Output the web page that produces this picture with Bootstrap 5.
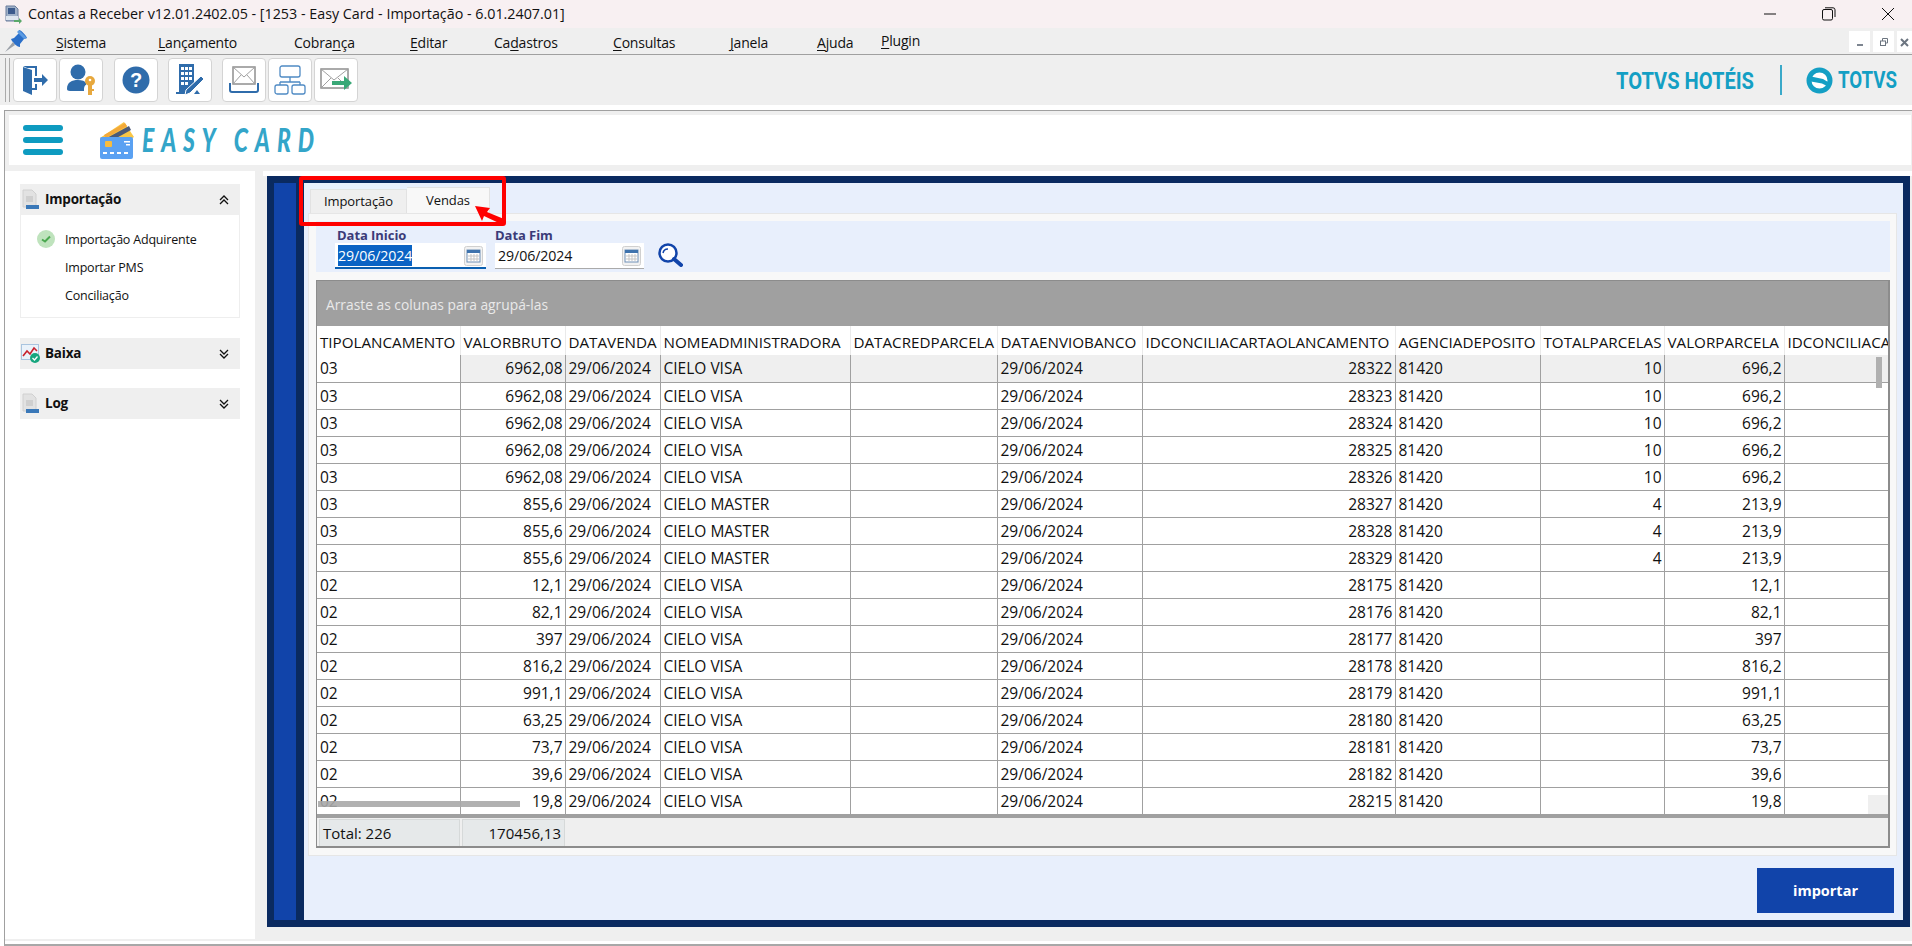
<!DOCTYPE html>
<html lang="pt-BR">
<head>
<meta charset="utf-8">
<title>Contas a Receber</title>
<link href="https://cdn.jsdelivr.net/npm/bootstrap@5.3.0/dist/css/bootstrap.min.css" rel="stylesheet">
<style>
html,body{height:946px;overflow:hidden}
body{font-family:"Open Sans","Noto Sans","Liberation Sans",sans-serif;font-size:14px;color:#111;background:#fff;width:1912px}
.titlebar{height:28px;background:#f8f0f2;font-size:14.3px;padding-left:4px}
.titleico{margin-right:6px}
.winbtns{margin-left:auto;width:148px;padding-right:17px}
.menubar{height:27px;background:#efefef;border-bottom:1px solid #a0a0a0;position:relative}
.menuitem{font-size:14px;letter-spacing:-.2px;position:absolute;top:4px}
.menuitem u{text-underline-offset:2px}
.mi1{left:56px}.mi2{left:158px}.mi3{left:294px}.mi4{left:410px}.mi5{left:494px}.mi6{left:613px}.mi7{left:730px}.mi8{left:817px}.mi9{left:881px;top:2px}
.pin{position:absolute;left:4px;top:1px}
.mdibtn{width:21px;height:21px;background:#fff;position:absolute;top:3px}
.mdi1{left:1849px}.mdi2{left:1873px}.mdi3{left:1897px;width:15px}
.toolbar{height:50px;background:#efefef;padding-left:5px}
.grip{width:5px;height:44px;border-left:1px solid #aaa;border-right:1px solid #aaa;margin-right:3px}
.tbtn{width:44px;height:44px;background:#fff;border:1px solid #d4d4d4;border-radius:4px;margin-right:2px}
.tsep{margin-left:8px}
.tsepA{margin-left:9px}
.brandtxt{font-family:"Roboto","Liberation Sans",sans-serif;font-weight:700;fill:#149fc4}
.brandsep{width:2px;height:30px;background:#3aa9c9;margin:0 24px 0 21px}
.brandlogo{margin-right:5px}
.brandend{margin-right:10px}
.whitestrip{height:5px;background:#fff}
.frameouter{height:836px;background:#fff;padding-left:4px}
.framebox{height:100%;background:#efefef;border-top:1px solid #a0a0a0;border-left:1px solid #a0a0a0;border-bottom:2px solid #a8a8a8;padding-top:4px;display:flex;flex-direction:column;position:relative}
.footstrip{height:3px;background:#fff;flex:none}
.apphead{height:50px;background:#fff;margin-left:4px;margin-right:1px;padding-left:14px}
.burger{width:40px;gap:6px}
.burger span{display:block;height:6px;border-radius:3px;background:#0e9bc0}
.cardlogo{margin-left:35px;margin-right:6px}
.easytxt{font-family:"Lato","Roboto",sans-serif;font-weight:900;font-style:italic;fill:#33a5c9}
.appbody{flex:1;padding-top:6px;min-height:0}
.sidebar{width:250px;background:#fff;padding:13px 15px 0 15px;margin-bottom:2px}
.sidehead{height:31px;background:#efefef;font-weight:700;font-size:13.5px;letter-spacing:-.2px;padding:0 10px 0 1px}
.sidehead svg.sico{margin-right:5px}
.sidehead .chev{margin-left:auto}
.sidebody{border:1px solid #eee;border-top:0;height:103px;padding:16px 0 0 16px;margin-bottom:20px;font-size:12.5px;letter-spacing:-.2px}
.sideitem{height:28px;padding-left:28px;position:relative}
.sideitem svg{position:absolute;left:0;top:-1px}
.sideblock{margin-bottom:19px}
.mainwrap{flex:1;margin-left:8px;padding:5px 2px 14px 4px;min-width:0;background:linear-gradient(#fff,#fff) top/100% 5px no-repeat #efefef}
.navyframe{height:100%;background:#0a2a60;padding:7px;gap:8px;width:1643px}
.bluestrip{width:22px;background:#1144aa;flex:none}
.lightpanel{flex:1;background:#e8effc;padding:4px 6px 7px 4px;min-width:0}
.tabs-x{border:0;height:26px;padding-left:2px;flex-wrap:nowrap}
.tabitem{font-size:13px;letter-spacing:-.1px;display:flex;align-items:center;justify-content:center;border:1px solid #e2e2e2;border-bottom:0}
.tabA{width:97px;height:24px;margin-top:2px;background:#efefef;padding-top:1px}
.tabB{width:83px;height:26px;background:#f8f8f8;border-left:0}
.tabpane{height:643px;background:#f8f8f8;border:1px solid #e6e6e6;padding:7px 6px 7px 7px}
.filterband{height:51px;background:#e8effc;padding:7px 0 0 19px;margin-bottom:8px;gap:9px}
.filterlabel{font-size:13px;font-weight:700;color:#3b3b78;line-height:15px;letter-spacing:-.05px}
.flabelA{padding-left:2px}
.dateinput{width:151px;height:26px;background:#fff;border-bottom:1px solid #aaa;padding:2px 3px 0 3px;font-size:14.2px;position:relative;letter-spacing:-.1px}
.dateinput.fw2{width:149px}
.dateinput.active{border-bottom:2px solid #0a5fb0}
.seltext{background:#0a63c4;color:#fff;display:inline-block;height:21px;line-height:21px}
.calico{position:absolute;right:3px;top:3px}
.searchico{margin-top:15px;margin-left:5px}
.gridbox{position:relative;width:1574px;height:568px;border:1px solid #8c8c8c;border-right-width:2px;border-bottom-width:2px;overflow:hidden;background:#fff}
.groupband{height:45px;background:#a0a0a0;color:#e9e9e9;font-size:13.8px;padding-left:9px;padding-top:3px}
.gridtable{table-layout:fixed;width:1573px;margin:0;font-size:15.5px;border-collapse:collapse;--bs-table-bg:transparent}
.gridtable th,.gridtable td{padding:1px 2px 0 3px;white-space:nowrap;overflow:hidden;border:0;box-shadow:none;color:#111;line-height:1.2}
.gridtable th{font-weight:400;font-size:15.2px;height:29px;background:#fff;border-right:1px solid #eaeaea;vertical-align:middle;padding-top:4px}
.gridtable td{height:27px;border-right:1px solid #a0a0a0;border-bottom:1px solid #a0a0a0;vertical-align:middle;background:#fff}
.gridtable tr.selrow td{background:#efefef}
.gridtable tr.selrow td:first-child{background:#fff}
.c1{width:143px}.c2{width:105px}.c3{width:95px}.c4{width:190px}.c5{width:147px}.c6{width:145px}.c7{width:253px}.c8{width:145px}.c9{width:124px}.c10{width:120px}.c11{width:106px}
.gridfoot{height:34px;background:#efefef;border-top:3px solid #a0a0a0;padding:1px 0 0 2px;gap:2px;font-size:15px}
.footcell{height:29px;background:#e6e9ea;border:1px solid #d6d9d9;display:flex;align-items:center;padding:0 3px}
.fc1{width:141px}.fc2{width:103px;justify-content:flex-end}
.vthumb{position:absolute;right:6px;top:76px;width:6px;height:31px;background:#b0b0b0}
.hthumb{position:absolute;left:1px;top:520px;width:202px;height:6px;background:#a8a8a8;opacity:.9}
.gridcorner{position:absolute;right:0;top:514px;width:20px;height:19px;background:#efefef}
.actionrow{height:45px;margin-top:12px;justify-content:flex-end;padding-right:3px}
.importbtn{width:137px;height:45px;background:#1144aa;border:0;border-radius:0;color:#fff;font-weight:700;font-size:14.5px;padding:0}
.importbtn:hover{background:#1144aa;color:#fff}
.redbox{position:absolute;left:294px;top:65px;width:207px;height:50px;border:4px solid #f00;border-radius:3px;pointer-events:none}
.redarrow{position:absolute;left:465px;top:91px;pointer-events:none}
</style>
</head>
<body>
<div class="titlebar d-flex align-items-center">
  <svg class="titleico" width="18" height="20" viewBox="0 0 18 20"><path d="M2 2h9l3 3v12H2z" fill="#9fb0c8" stroke="#6a7d9c"/><rect x="4" y="4" width="7" height="6" fill="#3c5a8c"/><rect x="2" y="12" width="12" height="4" fill="#dfe6ef"/><path d="M10 16h5v-2l3 3-3 3v-2h-5z" fill="#5aa86a"/></svg>
  <span>Contas a Receber v12.01.2402.05 - [1253 - Easy Card - Importação - 6.01.2407.01]</span>
  <div class="winbtns d-flex justify-content-between align-items-center">
    <svg width="13" height="14" viewBox="0 0 13 14"><path d="M0 7h12" stroke="#111" stroke-width="1"/></svg>
    <svg width="14" height="14" viewBox="0 0 14 14" fill="none" stroke="#111"><rect x=".5" y="2.500" width="10" height="10.500" rx="1.500"/><path d="M3 .8h8a2 2 0 0 1 2 2V10"/></svg>
    <svg width="14" height="14" viewBox="0 0 14 14"><path d="M1 1l12 12M13 1L1 13" stroke="#111" stroke-width="1"/></svg>
  </div>
</div>
<div class="menubar">
  <svg class="pin" width="24" height="24" viewBox="0 0 24 24"><path d="M15 1c2 0 7 5 8 8l-3 1-4 5 0 3c-3 0-8-5-9-8l3-1 5-5z" fill="#2a6fc9"/><path d="M15 1l8 8-3 1-7-7z" fill="#5b9be3"/><path d="M9 13L1 23l10-7z" fill="#9aa0a8"/></svg>
  <span class="menuitem mi1"><u>S</u>istema</span>
  <span class="menuitem mi2"><u>L</u>ançamento</span>
  <span class="menuitem mi3">Cobra<u>n</u>ça</span>
  <span class="menuitem mi4"><u>E</u>ditar</span>
  <span class="menuitem mi5">Ca<u>d</u>astros</span>
  <span class="menuitem mi6"><u>C</u>onsultas</span>
  <span class="menuitem mi7"><u>J</u>anela</span>
  <span class="menuitem mi8"><u>A</u>juda</span>
  <span class="menuitem mi9"><u>P</u>lugin</span>
  <div class="mdibtn mdi1 d-flex align-items-center justify-content-center"><svg width="10" height="10" viewBox="0 0 10 10"><path d="M2 8h6" stroke="#7d8590" stroke-width="2"/></svg></div>
  <div class="mdibtn mdi2 d-flex align-items-center justify-content-center"><svg width="10" height="10" viewBox="0 0 10 10" fill="none" stroke="#6c7580"><rect x="1.500" y="4" width="5" height="4.500"/><path d="M3.500 4V1.500h5V6H6.500"/></svg></div>
  <div class="mdibtn mdi3 d-flex align-items-center justify-content-center"><svg width="10" height="10" viewBox="0 0 10 10"><path d="M1 2l7 7M8 2L1 9" stroke="#6c7580" stroke-width="2"/></svg></div>
</div>
<div class="toolbar d-flex align-items-center">
  <div class="grip"></div>
  <div class="tbtn d-flex align-items-center justify-content-center"><svg width="28" height="30" viewBox="0 0 28 30"><path d="M2 2l9 3v25l-9-4z" fill="#2f6cab"/><path d="M2 1h14v10h-2V3H6z" fill="#2f6cab"/><path d="M14 19h2v6h-6v-2h4z" fill="#2f6cab"/><path d="M13 13h8V9l6 6-6 6v-4h-8z" fill="#2f6cab"/></svg></div>
  <div class="tbtn d-flex align-items-center justify-content-center"><svg width="30" height="32" viewBox="0 0 30 32"><circle cx="12" cy="8" r="7.500" fill="#2f6cab"/><path d="M1 25c0-7 5-9 11-9 4 0 7 1 8 3v2c-1 0-2 2-2 4v2H4c-2 0-3-1-3-2z" fill="#2f6cab"/><circle cx="24" cy="17" r="5" fill="#e7a83e"/><rect x="22" y="20" width="4" height="11" fill="#e7a83e"/><rect x="26" y="25" width="2" height="2" fill="#e7a83e"/><circle cx="24" cy="16" r="1.300" fill="#fff"/></svg></div>
  <div class="tbtn tsepA d-flex align-items-center justify-content-center"><svg width="28" height="28" viewBox="0 0 28 28"><circle cx="14" cy="14" r="13.500" fill="#2f6cab"/><text x="14" y="21" text-anchor="middle" font-family="Liberation Sans" font-weight="700" font-size="20" fill="#fff">?</text></svg></div>
  <div class="tbtn tsep d-flex align-items-center justify-content-center"><svg width="30" height="32" viewBox="0 0 30 32"><path d="M4 0h15v23l-7 7H1v-2h3z" fill="#2f6cab"/><g fill="#fff"><rect x="6" y="3" width="3" height="3"/><rect x="10" y="3" width="3" height="3"/><rect x="14" y="3" width="3" height="3"/><rect x="6" y="8" width="3" height="3"/><rect x="10" y="8" width="3" height="3"/><rect x="14" y="8" width="3" height="3"/><rect x="6" y="13" width="3" height="3"/><rect x="10" y="13" width="3" height="3"/><rect x="14" y="13" width="3" height="3"/><rect x="6" y="18" width="3" height="3"/><rect x="10" y="18" width="3" height="3"/></g><path d="M26 12l3 3-14 14-5 2 1-5z" fill="#2f6cab" stroke="#fff"/><path d="M19 30l3-4 3 4z" fill="#2f6cab"/></svg></div>
  <div class="tbtn tsep d-flex align-items-center justify-content-center"><svg width="32" height="28" viewBox="0 0 32 28"><rect x="5" y="1" width="22" height="17" fill="#fff" stroke="#8f8f8f" stroke-width="1.500"/><path d="M5 1l11 10L27 1M5 18l8-9M27 18l-8-9" fill="none" stroke="#a0a0a0"/><path d="M2 17v7c0 1 1 2 2 2h24c1 0 2-1 2-2v-7" fill="none" stroke="#2f6cab" stroke-width="2"/></svg></div>
  <div class="tbtn d-flex align-items-center justify-content-center"><svg width="32" height="30" viewBox="0 0 32 30" fill="none" stroke="#4f8ac4" stroke-width="1.300"><rect x="6" y="1" width="20" height="11" rx="2"/><path d="M16 12v5M6 17h20M6 17v3M26 17v3"/><rect x="1" y="20" width="13" height="9" rx="2"/><rect x="18" y="20" width="13" height="9" rx="2"/></svg></div>
  <div class="tbtn d-flex align-items-center justify-content-center"><svg width="32" height="26" viewBox="0 0 32 26"><rect x="1" y="2" width="27" height="19" fill="#fff" stroke="#8f8f8f" stroke-width="1.500"/><path d="M1 2l13 11L28 2M1 21l10-10M28 21L18 11" fill="none" stroke="#a0a0a0"/><path d="M12 14h12V9l8 7-8 7v-5H12z" fill="#3aa877"/></svg></div>
  <div class="ms-auto d-flex align-items-center">
    <svg width="143" height="26" viewBox="0 0 143 26"><text class="brandtxt" x="0" y="22" font-size="24" textLength="138" lengthAdjust="spacingAndGlyphs">TOTVS HOTÉIS</text></svg>
    <span class="brandsep"></span>
    <svg class="brandlogo" width="27" height="27" viewBox="0 0 27 27"><circle cx="13.500" cy="13.500" r="10.500" fill="#fff" stroke="#149fc4" stroke-width="5"/><path d="M5 9.500l12 2.500 5 3v4.500l-6-3-11-2z" fill="#149fc4"/></svg>
    <svg class="brandend" width="64" height="26" viewBox="0 0 64 26"><text class="brandtxt" x="0" y="21" font-size="24" textLength="59" lengthAdjust="spacingAndGlyphs">TOTVS</text></svg>
  </div>
</div>
<div class="whitestrip"></div>
<div class="frameouter">
  <div class="framebox">
    <div class="apphead d-flex align-items-center">
      <div class="burger d-flex flex-column"><span></span><span></span><span></span></div>
      <svg class="cardlogo" width="38" height="38" viewBox="0 0 38 38"><path d="M2 17L26 1l10 15-22 15z" fill="#f9c646"/><path d="M6 14L27 2l2 3L8 17z" fill="#f3a93a"/><path d="M7 18L31 5l2 4-20 11z" fill="#4b5a78"/><rect x="2" y="16" width="33" height="22" rx="2" fill="#5aa1f2"/><rect x="7" y="20" width="7" height="6" rx="1" fill="#f7bc3e"/><g fill="#fff"><rect x="5" y="31" width="4" height="2"/><rect x="12" y="31" width="4" height="2"/><rect x="19" y="31" width="4" height="2"/><rect x="26" y="31" width="4" height="2"/><rect x="26" y="20" width="6" height="1.500"/><rect x="28" y="23" width="4" height="1.500"/></g></svg>
      <svg width="190" height="36" viewBox="0 0 190 36"><text class="easytxt" x="0" y="30" font-size="33" letter-spacing="10" textLength="179" lengthAdjust="spacingAndGlyphs">EASY CARD</text></svg>
    </div>
    <div class="appbody d-flex">
      <aside class="sidebar">
        <div class="sidehead d-flex align-items-center"><svg class="sico" width="19" height="21" viewBox="0 0 19 21"><path d="M2 1h9l4 4v13H2z" fill="#e2e2e2" stroke="#d0d0d0"/><rect x="5" y="7" width="7" height="6" fill="#cfcfcf"/><rect x="5" y="16" width="13" height="4" fill="#3a78b8"/></svg><span>Importação</span><svg class="chev" width="12" height="12" viewBox="0 0 12 12" fill="none" stroke="#111" stroke-width="1.300"><path d="M2 6l4-4 4 4M2 10l4-4 4 4"/></svg></div>
        <div class="sidebody">
          <div class="sideitem"><svg width="18" height="18" viewBox="0 0 18 18"><circle cx="9" cy="9" r="9" fill="#bfe3bd"/><path d="M5 9.500l3 2 5-5" fill="none" stroke="#4aa84f" stroke-width="2"/></svg>Importação Adquirente</div>
          <div class="sideitem">Importar PMS</div>
          <div class="sideitem">Conciliação</div>
        </div>
        <div class="sideblock">
        <div class="sidehead d-flex align-items-center"><svg class="sico" width="19" height="21" viewBox="0 0 19 21"><rect x=".5" y="1.500" width="17" height="15" fill="#eaf2fa" stroke="#a9c4df"/><path d="M2 13l4-5 3 3 4-6 3 3" fill="none" stroke="#c8202c" stroke-width="1.600"/><circle cx="14" cy="15" r="5" fill="#17a67e"/><path d="M11.500 15l2 2 3-3.500" fill="none" stroke="#fff" stroke-width="1.300"/></svg><span>Baixa</span><svg class="chev" width="12" height="12" viewBox="0 0 12 12" fill="none" stroke="#111" stroke-width="1.300"><path d="M2 2l4 4 4-4M2 6l4 4 4-4"/></svg></div>
        </div>
        <div class="sidehead d-flex align-items-center"><svg class="sico" width="19" height="21" viewBox="0 0 19 21"><path d="M2 1h9l4 4v13H2z" fill="#e2e2e2" stroke="#d0d0d0"/><rect x="5" y="7" width="7" height="6" fill="#cfcfcf"/><rect x="5" y="16" width="13" height="4" fill="#3a78b8"/></svg><span>Log</span><svg class="chev" width="12" height="12" viewBox="0 0 12 12" fill="none" stroke="#111" stroke-width="1.300"><path d="M2 2l4 4 4-4M2 6l4 4 4-4"/></svg></div>
      </aside>
      <main class="mainwrap">
        <div class="navyframe d-flex">
          <div class="bluestrip"></div>
          <div class="lightpanel">
            <div class="tabs-x d-flex">
              <div class="tabitem tabA">Importação</div>
              <div class="tabitem tabB">Vendas</div>
            </div>
            <div class="tabpane">
              <div class="filterband d-flex">
                <div><div class="filterlabel flabelA">Data Inicio</div><div class="dateinput active"><span class="seltext">29/06/2024</span><svg class="calico" width="19" height="20" viewBox="0 0 19 20"><rect x=".5" y=".5" width="18" height="19" rx="2" fill="#f2f2f2" stroke="#d0d0d0"/><rect x="3" y="4" width="13" height="12" fill="#fff" stroke="#6f8fb5"/><rect x="3" y="4" width="13" height="3" fill="#3f73ad"/><path d="M4 10h11M4 13h11M7 8v7M10 8v7M13 8v7" stroke="#c5c5c5"/></svg></div></div>
                <div><div class="filterlabel">Data Fim</div><div class="dateinput fw2"><span>29/06/2024</span><svg class="calico" width="19" height="20" viewBox="0 0 19 20"><rect x=".5" y=".5" width="18" height="19" rx="2" fill="#f2f2f2" stroke="#d0d0d0"/><rect x="3" y="4" width="13" height="12" fill="#fff" stroke="#6f8fb5"/><rect x="3" y="4" width="13" height="3" fill="#3f73ad"/><path d="M4 10h11M4 13h11M7 8v7M10 8v7M13 8v7" stroke="#c5c5c5"/></svg></div></div>
                <svg class="searchico" width="25" height="24" viewBox="0 0 25 24"><circle cx="10" cy="10" r="8.500" fill="#fff" stroke="#1144aa" stroke-width="2.500"/><path d="M5 10a5 5 0 0 1 5-4" fill="none" stroke="#1144aa" stroke-width="1.500"/><path d="M16 16l7 6" stroke="#1144aa" stroke-width="4" stroke-linecap="round"/></svg>
              </div>
              <div class="gridbox">
                <div class="groupband d-flex align-items-center">Arraste as colunas para agrupá-las</div>
                <table class="table gridtable">
                  <colgroup><col class="c1"><col class="c2"><col class="c3"><col class="c4"><col class="c5"><col class="c6"><col class="c7"><col class="c8"><col class="c9"><col class="c10"><col class="c11"></colgroup>
                  <thead><tr><th>TIPOLANCAMENTO</th><th>VALORBRUTO</th><th>DATAVENDA</th><th>NOMEADMINISTRADORA</th><th>DATACREDPARCELA</th><th>DATAENVIOBANCO</th><th>IDCONCILIACARTAOLANCAMENTO</th><th>AGENCIADEPOSITO</th><th>TOTALPARCELAS</th><th>VALORPARCELA</th><th>IDCONCILIACA</th></tr></thead>
                  <tbody>
                    <tr class="selrow"><td>03</td><td class="text-end">6962,08</td><td>29/06/2024</td><td>CIELO VISA</td><td></td><td>29/06/2024</td><td class="text-end">28322</td><td>81420</td><td class="text-end">10</td><td class="text-end">696,2</td><td></td></tr>
                    <tr><td>03</td><td class="text-end">6962,08</td><td>29/06/2024</td><td>CIELO VISA</td><td></td><td>29/06/2024</td><td class="text-end">28323</td><td>81420</td><td class="text-end">10</td><td class="text-end">696,2</td><td></td></tr>
                    <tr><td>03</td><td class="text-end">6962,08</td><td>29/06/2024</td><td>CIELO VISA</td><td></td><td>29/06/2024</td><td class="text-end">28324</td><td>81420</td><td class="text-end">10</td><td class="text-end">696,2</td><td></td></tr>
                    <tr><td>03</td><td class="text-end">6962,08</td><td>29/06/2024</td><td>CIELO VISA</td><td></td><td>29/06/2024</td><td class="text-end">28325</td><td>81420</td><td class="text-end">10</td><td class="text-end">696,2</td><td></td></tr>
                    <tr><td>03</td><td class="text-end">6962,08</td><td>29/06/2024</td><td>CIELO VISA</td><td></td><td>29/06/2024</td><td class="text-end">28326</td><td>81420</td><td class="text-end">10</td><td class="text-end">696,2</td><td></td></tr>
                    <tr><td>03</td><td class="text-end">855,6</td><td>29/06/2024</td><td>CIELO MASTER</td><td></td><td>29/06/2024</td><td class="text-end">28327</td><td>81420</td><td class="text-end">4</td><td class="text-end">213,9</td><td></td></tr>
                    <tr><td>03</td><td class="text-end">855,6</td><td>29/06/2024</td><td>CIELO MASTER</td><td></td><td>29/06/2024</td><td class="text-end">28328</td><td>81420</td><td class="text-end">4</td><td class="text-end">213,9</td><td></td></tr>
                    <tr><td>03</td><td class="text-end">855,6</td><td>29/06/2024</td><td>CIELO MASTER</td><td></td><td>29/06/2024</td><td class="text-end">28329</td><td>81420</td><td class="text-end">4</td><td class="text-end">213,9</td><td></td></tr>
                    <tr><td>02</td><td class="text-end">12,1</td><td>29/06/2024</td><td>CIELO VISA</td><td></td><td>29/06/2024</td><td class="text-end">28175</td><td>81420</td><td></td><td class="text-end">12,1</td><td></td></tr>
                    <tr><td>02</td><td class="text-end">82,1</td><td>29/06/2024</td><td>CIELO VISA</td><td></td><td>29/06/2024</td><td class="text-end">28176</td><td>81420</td><td></td><td class="text-end">82,1</td><td></td></tr>
                    <tr><td>02</td><td class="text-end">397</td><td>29/06/2024</td><td>CIELO VISA</td><td></td><td>29/06/2024</td><td class="text-end">28177</td><td>81420</td><td></td><td class="text-end">397</td><td></td></tr>
                    <tr><td>02</td><td class="text-end">816,2</td><td>29/06/2024</td><td>CIELO VISA</td><td></td><td>29/06/2024</td><td class="text-end">28178</td><td>81420</td><td></td><td class="text-end">816,2</td><td></td></tr>
                    <tr><td>02</td><td class="text-end">991,1</td><td>29/06/2024</td><td>CIELO VISA</td><td></td><td>29/06/2024</td><td class="text-end">28179</td><td>81420</td><td></td><td class="text-end">991,1</td><td></td></tr>
                    <tr><td>02</td><td class="text-end">63,25</td><td>29/06/2024</td><td>CIELO VISA</td><td></td><td>29/06/2024</td><td class="text-end">28180</td><td>81420</td><td></td><td class="text-end">63,25</td><td></td></tr>
                    <tr><td>02</td><td class="text-end">73,7</td><td>29/06/2024</td><td>CIELO VISA</td><td></td><td>29/06/2024</td><td class="text-end">28181</td><td>81420</td><td></td><td class="text-end">73,7</td><td></td></tr>
                    <tr><td>02</td><td class="text-end">39,6</td><td>29/06/2024</td><td>CIELO VISA</td><td></td><td>29/06/2024</td><td class="text-end">28182</td><td>81420</td><td></td><td class="text-end">39,6</td><td></td></tr>
                    <tr><td>02</td><td class="text-end">19,8</td><td>29/06/2024</td><td>CIELO VISA</td><td></td><td>29/06/2024</td><td class="text-end">28215</td><td>81420</td><td></td><td class="text-end">19,8</td><td></td></tr>
                  </tbody>
                </table>
                <div class="gridfoot d-flex"><div class="footcell fc1">Total: 226</div><div class="footcell fc2">170456,13</div></div>
                <div class="vthumb"></div>
                <div class="gridcorner"></div>
                <div class="hthumb"></div>
              </div>
            </div>
            <div class="actionrow d-flex"><button type="button" class="btn importbtn">importar</button></div>
          </div>
        </div>
      </main>
    </div>
    <div class="footstrip"></div>
    <div class="redbox"></div>
    <svg class="redarrow" width="40" height="30" viewBox="0 0 40 30"><path d="M5 4L20 6l-3 4 17 7-3 5L14 14l-2 5z" fill="#f00"/></svg>
  </div>
</div>
</body>
</html>
